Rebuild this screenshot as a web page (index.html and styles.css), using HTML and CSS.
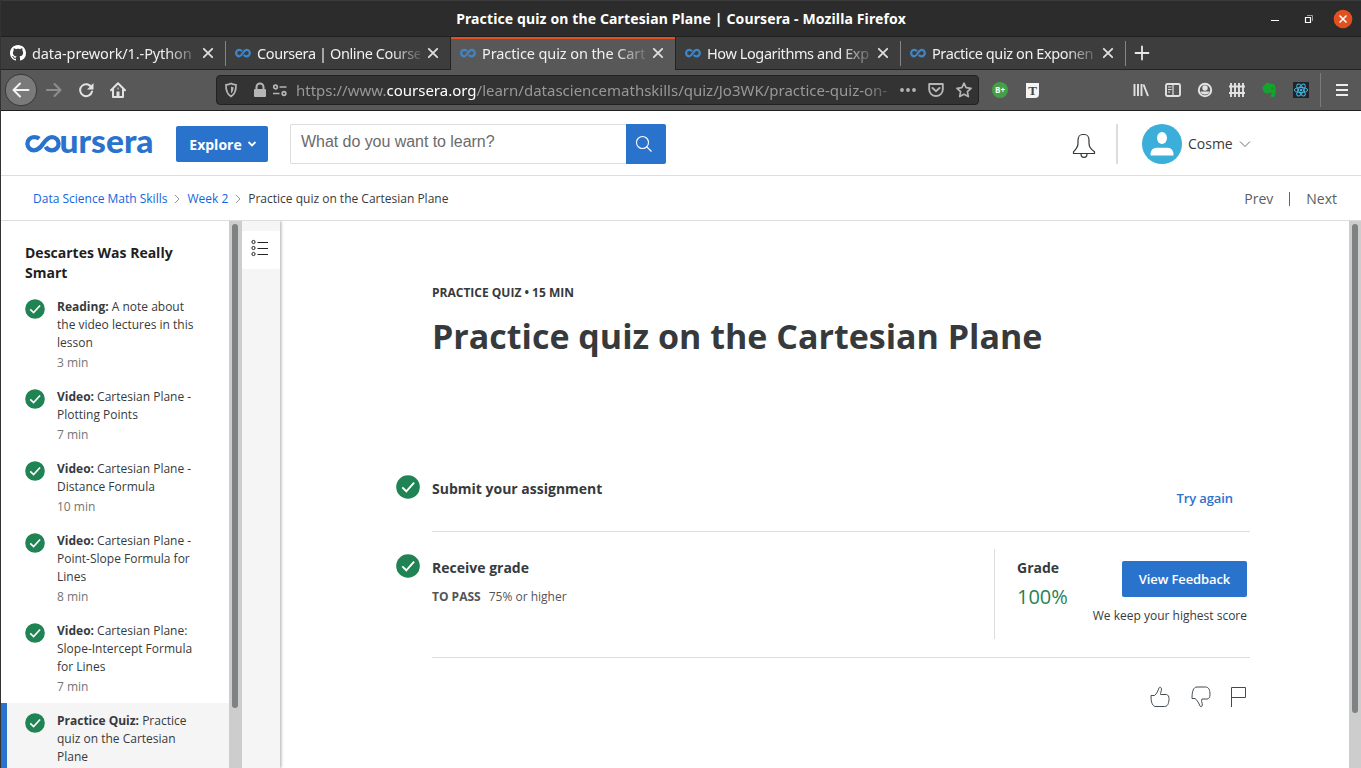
FILE: index.html
```html
<!DOCTYPE html>
<html lang="en">
<head>
<meta charset="utf-8">
<title>Practice quiz on the Cartesian Plane | Coursera</title>
<link rel="stylesheet" href="styles.css">
</head>
<body>
<svg class="defs" width="0" height="0">
  <symbol id="loop" viewBox="0 0 16 16"><path d="M7 6.2C6.2 5.2 5.2 4.9 4.3 4.9a3.2 3.2 0 0 0 0 6.4C7.2 11.3 8.3 4.9 11.6 4.9a3.2 3.2 0 0 1 0 6.4C10.2 11.3 9.3 10.6 8.8 9.8" fill="none" stroke="#3f86c9" stroke-width="2.2"/></symbol>
  <symbol id="close" viewBox="0 0 16 16"><path d="M3.8 3.8l8.400 8.400M12.200 3.800l-8.400 8.400" stroke="#dedede" stroke-width="1.8" stroke-linecap="round"/></symbol>
  <symbol id="check" viewBox="0 0 24 24"><circle cx="12" cy="12" r="11.800" fill="#1f8354"/><path d="M6.3 12.4l4 3.9 7.8-8.6" fill="none" stroke="#fff" stroke-width="1.9"/></symbol>
</svg>
<div class="window">
  <div class="titlebar">
    <span class="window-title">Practice quiz on the Cartesian Plane | Coursera - Mozilla Firefox</span>
    <div class="window-buttons">
      <svg width="10" height="16"><path d="M1 9.500h8" stroke="#fff"/></svg>
      <svg width="10" height="16"><path d="M1.500 6.500h5v5h-5z" fill="none" stroke="#fff" stroke-width="1.2"/><path d="M3 4.500h5.500v5.500" fill="none" stroke="#999"/></svg>
      <svg width="20" height="20" viewBox="0 0 20 20"><circle cx="10" cy="10" r="9.300" fill="#e2501f"/><path d="M6.500 6.500l7 7M13.500 6.500l-7 7" stroke="#fff" stroke-width="1.500"/></svg>
    </div>
  </div>
  <div class="tabs">
    <div class="tab"><svg class="fav" viewBox="0 0 16 16"><path fill="#fff" fill-rule="evenodd" d="M8 0C3.580 0 0 3.580 0 8c0 3.540 2.290 6.530 5.470 7.590.4.070.55-.17.55-.38 0-.19-.01-.82-.01-1.490-2.010.37-2.530-.49-2.690-.94-.09-.23-.48-.94-.82-1.130-.28-.15-.68-.52-.01-.53.63-.01 1.080.58 1.230.82.72 1.210 1.870.87 2.330.66.07-.52.28-.87.51-1.070-1.780-.2-3.640-.89-3.640-3.950 0-.87.31-1.590.82-2.150-.08-.2-.36-1.020.08-2.120 0 0 .67-.21 2.200.82.64-.18 1.320-.27 2-.27s1.360.09 2 .27c1.530-1.040 2.200-.82 2.200-.82.44 1.100.16 1.920.08 2.120.51.56.82 1.270.82 2.150 0 3.070-1.870 3.750-3.650 3.950.29.25.54.73.54 1.480 0 1.070-.01 1.930-.01 2.200 0 .21.15.46.55.38A8.010 8.010 0 0 0 16 8c0-4.420-3.580-8-8-8z"/></svg><span class="tab-title">data-prework/1.-Python</span><svg class="x"><use href="#close"/></svg></div>
    <div class="tab"><svg class="fav"><use href="#loop"/></svg><span class="tab-title tight">Coursera | Online Course</span><svg class="x"><use href="#close"/></svg></div>
    <div class="tab active"><svg class="fav"><use href="#loop"/></svg><span class="tab-title">Practice quiz on the Cart</span><svg class="x"><use href="#close"/></svg></div>
    <div class="tab"><svg class="fav"><use href="#loop"/></svg><span class="tab-title tight">How Logarithms and Exp</span><svg class="x"><use href="#close"/></svg></div>
    <div class="tab"><svg class="fav"><use href="#loop"/></svg><span class="tab-title tight">Practice quiz on Exponen</span><svg class="x"><use href="#close"/></svg></div>
    <svg class="plus" width="16" height="16"><path d="M8 1.500v13M1.500 8h13" stroke="#e8e8e8" stroke-width="1.800" stroke-linecap="round"/></svg>
  </div>
  <div class="toolbar">
    <div class="nav">
      <svg width="34" height="34"><circle cx="17" cy="17" r="15.800" fill="#7a7a7a" stroke="#373737"/><path d="M24.500 17H10M16 10.500L9.500 17l6.500 6.500" fill="none" stroke="#f2f2f2" stroke-width="2" stroke-linecap="round" stroke-linejoin="round"/></svg>
      <svg width="16" height="16"><path d="M1 8h13M8.500 2L14.500 8l-6 6" fill="none" stroke="#8e8e8e" stroke-width="2" stroke-linecap="round" stroke-linejoin="round"/></svg>
      <svg width="16" height="16"><path d="M13.500 5.500A6 6 0 1 0 14 9.500" fill="none" stroke="#e2e2e2" stroke-width="2" stroke-linecap="round"/><path d="M15.500 1v6.500H9z" fill="#e2e2e2"/></svg>
      <svg width="16" height="16"><path d="M1 8.300L8 1.300l7 7M3 7v8h10V7" fill="none" stroke="#e2e2e2" stroke-width="2" stroke-linecap="round" stroke-linejoin="round"/><path d="M6.500 9.500h3V15h-3z" fill="#e2e2e2"/><path d="M8 5.500v2" stroke="#e2e2e2"/></svg>
    </div>
    <div class="urlbar">
      <svg width="14" height="16"><path d="M7 1.500c1.800 1 3.500 1.200 5 1.300.2 5-.7 9.200-5 11.700-4.300-2.500-5.200-6.700-5-11.700 1.500-.1 3.200-.3 5-1.300z" fill="none" stroke="#b5b5b5" stroke-width="1.700"/><path d="M7 4.500c1 .4 1.600.6 2.600.7-.1 2.900-.7 4.600-2.600 6.300z" fill="#b5b5b5"/></svg>
      <i class="bar"></i>
      <svg width="14" height="16"><rect x="1" y="7" width="12" height="8" rx="1" fill="#b5b5b5"/><path d="M3.500 8V5a3.500 3.500 0 0 1 7 0v3" fill="none" stroke="#b5b5b5" stroke-width="2"/></svg>
      <svg class="perm" width="16" height="16"><g fill="none" stroke="#b5b5b5" stroke-width="1.700"><circle cx="3.500" cy="5" r="1.800"/><path d="M7.500 5h7M1 11.500h6.500"/><circle cx="12" cy="11.500" r="1.800"/></g></svg>
      <span class="url">https://www.<b>coursera.org</b>/learn/datasciencemathskills/quiz/Jo3WK/practice-quiz-on-</span>
      <svg width="16" height="16"><g fill="#b5b5b5"><circle cx="2" cy="8" r="1.900"/><circle cx="8" cy="8" r="1.900"/><circle cx="14" cy="8" r="1.900"/></g></svg>
      <svg width="16" height="16"><path d="M1.200 2h13.600v5.500a6.800 6.500 0 0 1-13.600 0z" fill="none" stroke="#b5b5b5" stroke-width="1.900" stroke-linejoin="round"/><path d="M4.500 6L8 9.300 11.500 6" fill="none" stroke="#b5b5b5" stroke-width="1.900" stroke-linecap="round"/></svg>
      <svg width="16" height="16"><path d="M8 1.200l2.100 4.500 4.900.6-3.600 3.400.9 4.900L8 12.200l-4.300 2.400.9-4.900L1 6.300l4.900-.6z" fill="none" stroke="#b5b5b5" stroke-width="1.700" stroke-linejoin="round"/></svg>
    </div>
    <div class="ext">
      <span class="bplus">B+</span>
      <span class="tnote">T</span>
    </div>
    <div class="tools">
      <svg width="16" height="16"><path d="M1.500 2v12M5 2v12M8.500 2v12M10.500 2.500l4.500 11.500" stroke="#e2e2e2" stroke-width="1.900"/></svg>
      <svg width="16" height="16"><rect x="1" y="2" width="14" height="12" rx="1.500" fill="none" stroke="#e2e2e2" stroke-width="1.900"/><path d="M8 2v12M3 5h3.500M3 7.500h3.500M3 10h2" stroke="#e2e2e2" stroke-width="1.200"/></svg>
      <svg width="16" height="16"><circle cx="8" cy="8" r="6.200" fill="none" stroke="#e2e2e2" stroke-width="2"/><circle cx="8" cy="6" r="2.700" fill="#e2e2e2"/><path d="M3.500 9.500h9c0 1.300-1.500 3-4.500 3s-4.500-1.700-4.500-3z" fill="#e2e2e2"/></svg>
      <svg width="16" height="16"><path d="M2 1v14M6 1v14M10 1v14M14 1v14M0 4.500h16M0 11h16" stroke="#e2e2e2" stroke-width="1.900"/></svg>
      <svg width="16" height="16"><path d="M1.500 5L5 1.200c1.500-.6 3.200-.4 4 .5 2.500 0 4.600.5 5 1.500.8 3.500.8 8.200-.3 10.800-.7 1.600-3.600 1.500-4 0-.2-1.300.5-2.200 1.800-2-.4-1-1.600-.9-2.500-1.700-.7 1.200-1.800 1.400-3.500 1.200C2.800 11 1.300 8 1.500 5z" fill="#12a52c"/><path d="M10.500 6.500q1.200-.7 2 .3" stroke="#555" fill="none"/></svg>
      <svg width="16" height="16"><path fill="#20232a" d="M0 0h16v16H0z"/><g fill="none" stroke="#3fb6dc" stroke-width="1"><ellipse cx="8" cy="8" rx="6.700" ry="2.600"/><ellipse cx="8" cy="8" rx="6.700" ry="2.600" transform="rotate(60 8 8)"/><ellipse cx="8" cy="8" rx="6.700" ry="2.600" transform="rotate(120 8 8)"/></g><circle cx="8" cy="8" r="1.300" fill="#3fb6dc"/></svg>
    </div>
    <div class="menu"><svg width="14" height="16"><path d="M1 3h12M1 8h12M1 13h12" stroke="#ededed" stroke-width="2"/></svg></div>
  </div>

  <header class="header">
    <svg class="logo" width="132" height="26" viewBox="24 130 132 26"><path d="M39.300 137.600C37.800 136.400 36 136.100 34 136.100A6.600 6.600 0 0 0 34 149.300C43 149.300 43.500 136.100 52 136.100A6.600 6.600 0 0 1 52 149.300C49 149.300 46.800 148 45.700 145.800" fill="none" stroke="#2a73cc" stroke-width="4.300"/><text class="logo-text" x="59.500" y="151.500" textLength="94" lengthAdjust="spacingAndGlyphs">ursera</text></svg>
    <button class="explore">Explore<svg width="10" height="8"><path d="M1.500 2L5 5.500 8.500 2" fill="none" stroke="#fff" stroke-width="1.800"/></svg></button>
    <div class="search"><span class="field">What do you want to learn?</span><span class="go"><svg width="18" height="18"><circle cx="7.500" cy="7.500" r="6" fill="none" stroke="#fff" stroke-width="1.100"/><path d="M11.800 11.800l4.700 4.700" stroke="#fff" stroke-width="1.200"/></svg></span></div>
    <div class="account">
      <svg class="bell" width="24" height="26"><path d="M1.500 20.500v-1.700c2.500-2.500 4.500-4.500 4.500-8.300V7.500C6 4 8 1.500 10.500 1.500h2C15 1.500 17 4 17 7.500v3c0 3.800 2 5.800 5.500 8.300v1.700z" fill="none" stroke="#30383c" stroke-width="1.200"/><path d="M9 21c0 4.500 6 4.500 6 0" fill="none" stroke="#30383c" stroke-width="1.200"/></svg>
      <i class="rule"></i>
      <svg class="avatar" width="40" height="40"><circle cx="20" cy="20" r="20" fill="#3bafda"/><ellipse cx="20" cy="14" rx="5" ry="6" fill="#fff"/><path d="M8.500 31.500c-.3-6 3-7.700 7.500-7.700h8c4.500 0 7.800 1.700 7.500 7.700z" fill="#fff"/></svg>
      <span class="name">Cosme</span>
      <svg class="caret" width="12" height="8"><path d="M1 1.500l5 5 5-5" fill="none" stroke="#6b7074"/></svg>
    </div>
  </header>

  <nav class="crumbs">
    <a>Data Science Math Skills</a><svg width="6" height="10"><path d="M1 1l4 4-4 4" fill="none" stroke="#999"/></svg><a>Week 2</a><svg width="6" height="10"><path d="M1 1l4 4-4 4" fill="none" stroke="#999"/></svg><span>Practice quiz on the Cartesian Plane</span>
    <div class="pager"><span>Prev</span><i></i><span>Next</span></div>
  </nav>

  <div class="body">
    <aside class="lessons">
      <h2>Descartes Was Really<br>Smart</h2>
      <div class="item"><svg><use href="#check"/></svg><p><b>Reading:</b> A note about<br>the video lectures in this<br>lesson<small>3 min</small></p></div>
      <div class="item"><svg><use href="#check"/></svg><p><b>Video:</b> Cartesian Plane -<br>Plotting Points<small>7 min</small></p></div>
      <div class="item"><svg><use href="#check"/></svg><p><b>Video:</b> Cartesian Plane -<br>Distance Formula<small>10 min</small></p></div>
      <div class="item"><svg><use href="#check"/></svg><p><b>Video:</b> Cartesian Plane -<br>Point-Slope Formula for<br>Lines<small>8 min</small></p></div>
      <div class="item"><svg><use href="#check"/></svg><p><b>Video:</b> Cartesian Plane:<br>Slope-Intercept Formula<br>for Lines<small>7 min</small></p></div>
      <div class="item current"><svg><use href="#check"/></svg><p><b>Practice Quiz:</b> Practice<br>quiz on the Cartesian<br>Plane</p></div>
    </aside>
    <div class="scroll side"><i></i></div>
    <div class="rail"><span><svg width="18" height="18"><g fill="none" stroke="#222"><circle cx="2.500" cy="3" r="1.600"/><circle cx="2.500" cy="9" r="1.600"/><circle cx="2.500" cy="15" r="1.600"/><path d="M6.500 3.500H17M6.500 9.500H17M6.500 15.500H17"/></g></svg></span></div>
    <main class="quiz">
      <div class="kind">PRACTICE QUIZ • 15 MIN</div>
      <h1>Practice quiz on the Cartesian Plane</h1>
      <section class="step submit"><svg><use href="#check"/></svg><div class="content"><h3>Submit your assignment</h3><a class="again">Try again</a></div></section>
      <section class="step receive"><svg><use href="#check"/></svg><div class="content"><div><h3>Receive grade</h3><p class="pass"><b>TO PASS</b>75% or higher</p></div>
        <div class="result"><div class="grade"><h3>Grade</h3><span>100%</span></div><div class="feedback"><button>View Feedback</button><span>We keep your highest score</span></div></div></div></section>
      <div class="rate">
        <svg width="20" height="22"><path d="M1 9.500h3.500c2.500-2 3.500-5 4.500-7.500.5-1.300 2.500-.8 2.500 1 0 2.300-1.500 4.500-.8 5.500h5.800c1.700.5 2.500 2 2.500 4 0 3-.5 8-4.500 8H6C2.500 20.500 1 17 1 9.500z" fill="none" stroke="#444b50"/></svg>
        <svg width="20" height="22"><path d="M1 12.500h3c2.500 2 4 5 5 7.500.7 1.300 2.300.8 2.300-1 0-2.300-1.500-4.500-.3-6h5c2 0 3-2 3-4.500 0-4-1-7.500-4.500-7.500H6C2.500 1 1 5 1 12.500z" fill="none" stroke="#444b50"/></svg>
        <svg width="17" height="22"><path d="M1.500 21V1.500h14v10h-14" fill="none" stroke="#444b50"/></svg>
      </div>
    </main>
    <div class="scroll page"><i></i></div>
  </div>
</div>
</body>
</html>
```
FILE: styles.css
```css
* { box-sizing: border-box; }
body { margin: 0; width: 1361px; height: 768px; overflow: hidden; background: #fff; font-family: "Open Sans", "Noto Sans", sans-serif; color: #373a3c; }
svg { display: block; flex: none; }
.defs { position: absolute; }
h1, h2, h3, p { margin: 0; }
button { border: 0; padding: 0; font-family: inherit; }
.window { height: 768px; border-left: 1px solid #333; display: flex; flex-direction: column; }

.titlebar { height: 37px; background: #2c2c2c; border-top: 1px solid #3b3b3b; border-bottom: 1px solid #202020; display: grid; grid-template-columns: 1fr auto 1fr; align-items: center; color: #fff; font: 700 14px "Noto Sans", sans-serif; }
.window-title { grid-column: 2; letter-spacing: 0.13px; white-space: nowrap; }
.window-buttons { justify-self: end; display: flex; align-items: center; gap: 24px; padding-right: 8px; }
.window-buttons svg:nth-child(3) { margin-left: -5px; }

.tabs { height: 33px; background: #3d3d3d; border-bottom: 1px solid #232323; display: flex; color: #f0f0f0; font: 14.500px "Noto Sans", sans-serif; }
.tab { width: 225px; padding: 0 9px; display: flex; align-items: center; border-right: 1px solid transparent; border-image: linear-gradient(transparent 15%, #858585 15%, #858585 88%, transparent 88%) 1; }
.tab:nth-child(2) { border-image: none; border-right-color: #232323; background-clip: padding-box; }
.tab.active { height: 33px; padding-bottom: 1px; background: #585858; border-image: none; border-right-color: #232323; box-shadow: inset 0 2px #e2501f; }
.fav { width: 16px; height: 16px; margin-right: 6px; }
.tab-title { flex: 0 0 163px; min-width: 0; white-space: nowrap; letter-spacing: -0.1px; -webkit-mask-image: linear-gradient(90deg, #000 82%, transparent 104%); mask-image: linear-gradient(90deg, #000 82%, transparent 104%); }
.tab-title.tight { letter-spacing: -0.4px; }
.x { width: 16px; height: 16px; margin-left: 5px; }
.plus { align-self: center; margin-left: 8px; }

.toolbar { height: 41px; background: #585858; border-bottom: 1px solid #1f1f1f; display: flex; align-items: center; }
.nav { display: flex; align-items: center; gap: 16px; padding-left: 3px; width: 215px; }
.nav svg:nth-child(2) { margin-left: -8px; }
.urlbar { width: 763px; height: 30px; background: #333; border: 1px solid #222; border-radius: 4px; display: flex; align-items: center; padding: 0 7px; }
.bar { width: 1px; height: 22px; background: #1f1f1f; margin: 0 8px 0 7px; }
.perm { margin: 0 8px 0 5px; }
.url { flex: 0 0 592px; min-width: 0; white-space: nowrap; font: 15px "Noto Sans", sans-serif; letter-spacing: 0; color: #989898; margin-right: 12px; -webkit-mask-image: linear-gradient(90deg, #000 96%, transparent 102%); mask-image: linear-gradient(90deg, #000 96%, transparent 102%); }
.url b { font-weight: 400; color: #fff; }
.urlbar svg:nth-last-child(-n+2) { margin-left: 12px; }
.ext { display: flex; align-items: center; gap: 18px; padding-left: 13px; }
.bplus { width: 16px; height: 16px; border-radius: 50%; background: #43a047; color: #fff; font: 700 8px/16px "Open Sans", sans-serif; text-align: center; }
.tnote { width: 13px; height: 15px; background: #f4f4f4; color: #444; font: 700 13px/15px "Liberation Serif", serif; text-align: center; border-bottom-right-radius: 4px; }
.tools { display: flex; gap: 16px; margin-left: auto; padding-right: 11px; }
.menu { border-left: 1px solid #7b7b7b; height: 34px; display: flex; align-items: center; padding: 0 12px 0 14px; }

.header { height: 65px; border-bottom: 1px solid #ddd; display: flex; align-items: center; padding: 2px 0 0 23px; }
.logo { overflow: visible; }
.logo-text { font: 900 33px Lato, sans-serif; fill: #2a73cc; }
.explore { margin-left: 20px; width: 92px; height: 36px; border-radius: 2px; background: #2a73cc; color: #fff; font-size: 14px; font-weight: 700; display: flex; align-items: center; justify-content: center; gap: 5px; padding-left: 2px; }
.search { margin-left: 22px; display: flex; }
.field { width: 336px; height: 40px; border: 1px solid #ddd; border-right: 0; border-radius: 2px 0 0 2px; padding-left: 10px; font: 16px/34px "Liberation Sans", Arial, sans-serif; letter-spacing: -0.05px; color: #6b6b6b; }
.go { width: 40px; height: 40px; border-radius: 0 2px 2px 0; background: #2a73cc; padding: 11px 9px; }
.account { margin-left: 406px; display: flex; align-items: center; font-size: 14px; }
.bell { margin-top: 4px; }
.rule { width: 2px; height: 40px; background: #ddd; margin: 0 24px 0 20px; }
.avatar { margin-right: 6px; }
.name { margin-bottom: 2px; }
.caret { margin-left: 6px; }

.crumbs { height: 45px; border-bottom: 1px solid #ddd; display: flex; align-items: center; padding: 0 24px 0 32px; font-size: 12px; }
.crumbs a { color: #1565e0; }
.crumbs svg { margin: 2px 7px 0; }
.pager { margin-left: auto; display: flex; align-items: center; gap: 16px; font-size: 14px; color: #5a5e61; }
.pager i { width: 1px; height: 14px; margin-top: 2px; background: #666; }

.body { flex: 1; min-height: 0; display: flex; }
.lessons { width: 228px; overflow: hidden; padding-top: 22px; }
.lessons h2 { font-size: 14px; line-height: 20px; color: #1f1f1f; padding-left: 24px; margin-bottom: 6px; }
.item { display: flex; gap: 12px; padding: 9px 0 7px 24px; font-size: 12px; line-height: 18px; }
.item svg { width: 20px; height: 20px; margin-top: 1px; }
.item p { white-space: nowrap; }
.item small { display: block; font-size: 12px; margin-top: 2px; color: #757575; }
.item.current { background: #f5f5f5; border-left: 6px solid #2a73cc; padding-left: 18px; }
.scroll { background: #cdcdcd; padding-top: 3px; }
.scroll i { display: block; width: 6px; border-radius: 3px; background: #7e8282; margin-left: 3px; }
.side { width: 13px; }
.side i { height: 484px; }
.rail { width: 38px; background: #f5f5f5; padding-top: 10px; box-shadow: 1px 0 3px #aaa; clip-path: inset(0 -5px 0 0); }
.rail span { display: block; height: 38px; background: #fff; border-radius: 2px; padding: 8px 9px; }
.quiz { flex: 1; padding: 62px 99px 0 152px; }
.kind { font-size: 12px; line-height: 20px; font-weight: 700; }
.quiz h1 { font-size: 34px; line-height: 48px; margin-top: 9px; white-space: nowrap; }
.step { display: flex; gap: 12px; margin-left: -36px; }
.step > svg { width: 24px; height: 24px; }
.step h3 { font-size: 14px; line-height: 20px; }
.content { flex: 1; display: flex; justify-content: space-between; border-bottom: 1px solid #ddd; }
.submit { margin-top: 115px; height: 57px; }
.submit .content { padding-top: 4px; }
.again { font-size: 13px; line-height: 20px; font-weight: 600; letter-spacing: -0.1px; color: #2a73cc; margin: 9px 17px 0 0; }
.receive { height: 126px; padding-top: 22px; }
.receive .content { padding-top: 4px; }
.pass { font-size: 12px; line-height: 18px; margin-top: 10px; color: #555; }
.pass b { margin-right: 8px; }
.result { display: flex; width: 256px; height: 90px; margin-top: -9px; border-left: 1px solid #ddd; padding: 9px 3px 0 22px; justify-content: space-between; }
.grade span { display: block; color: #1f8354; font-size: 20px; line-height: 28px; margin-top: 5px; }
.feedback { display: flex; flex-direction: column; align-items: flex-end; padding-top: 3px; white-space: nowrap; }
.feedback button { width: 125px; height: 36px; border-radius: 2px; background: #2a73cc; color: #fff; font-size: 13px; font-weight: 600; letter-spacing: -0.1px; }
.feedback span { font-size: 12px; line-height: 18px; margin-top: 10px; }
.rate { display: flex; justify-content: flex-end; gap: 21px; padding: 28px 3px 0 0; }
.rate svg:nth-child(3) { margin-left: -2px; }
.page { width: 12px; }
.page i { height: 489px; }
```
